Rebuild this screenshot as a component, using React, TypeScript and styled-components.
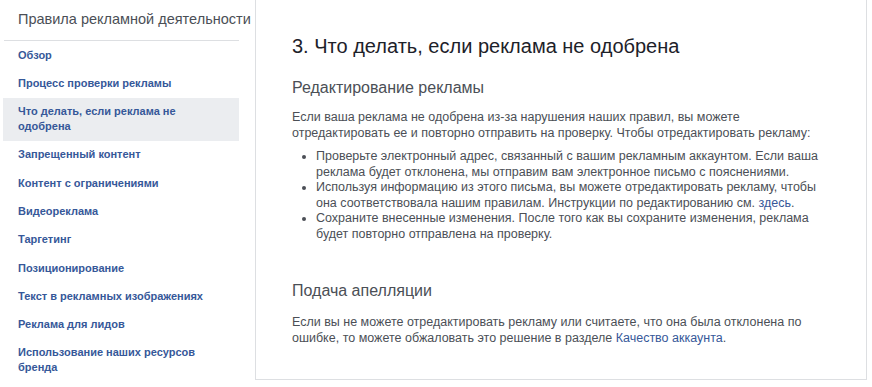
import React from "react";
import styled, { createGlobalStyle } from "styled-components";

const GlobalStyle = createGlobalStyle`
  html, body {
    margin: 0;
    padding: 0;
    background: #fff;
  }
  body {
    font-family: "Liberation Sans", Arial, Helvetica, sans-serif;
    color: #4b4f56;
  }
`;

const Page = styled.div`
  display: flex;
  align-items: flex-start;
  gap: 16px;
  padding-left: 3px;
  width: 872px;
  height: 387px;
  box-sizing: border-box;
  overflow: hidden;
`;

const Sidebar = styled.nav`
  width: 236px;
  flex-shrink: 0;
`;

const SidebarTitle = styled.div`
  padding: 10px 14px 11px;
  font-size: 14.5px;
  line-height: 19px;
  color: #4b4f56;
  white-space: nowrap;
  border-bottom: 1px solid #dddfe2;
  margin-left: 1px;
`;

const Menu = styled.ul`
  list-style: none;
  margin: 0;
  padding: 0;
`;

const MenuItem = styled.li<{ $active?: boolean }>`
  padding: 6.65px 16px 6.65px 15px;
  font-size: 11px;
  font-weight: bold;
  line-height: 15px;
  color: #365899;
  background: ${(p) => (p.$active ? "#ebedf0" : "transparent")};
`;

const Card = styled.main`
  width: 612px;
  box-sizing: border-box;
  border: 1px solid #dddfe2;
  border-top: none;
  padding: 34px 44px 33px 36px;
  background: #fff;
`;

const Heading = styled.h1`
  margin: 0;
  font-size: 20px;
  line-height: 24px;
  font-weight: normal;
  color: #1d2129;
`;

const SubHeading = styled.h2<{ $gap: number }>`
  margin: ${(p) => p.$gap}px 0 0;
  font-size: 16px;
  line-height: 20px;
  font-weight: normal;
  color: #4b4f56;
`;

const Para = styled.p<{ $gap: number }>`
  margin: ${(p) => p.$gap}px 0 0;
  font-size: 12.5px;
  line-height: 16px;
  color: #4b4f56;
`;

const List = styled.ul`
  margin: 8px 0 0;
  padding-left: 24px;
  font-size: 12.5px;
  line-height: 15.5px;
  color: #4b4f56;
`;

const Link = styled.a`
  color: #365899;
  text-decoration: none;
`;

const menu = [
  "Обзор",
  "Процесс проверки рекламы",
  "Что делать, если реклама не одобрена",
  "Запрещенный контент",
  "Контент с ограничениями",
  "Видеореклама",
  "Таргетинг",
  "Позиционирование",
  "Текст в рекламных изображениях",
  "Реклама для лидов",
  "Использование наших ресурсов бренда",
];

export default function App() {
  return (
    <>
      <GlobalStyle />
      <Page>
        <Sidebar>
          <SidebarTitle>Правила рекламной деятельности</SidebarTitle>
          <Menu>
            {menu.map((item, i) => (
              <MenuItem key={item} $active={i === 2}>
                {item}
              </MenuItem>
            ))}
          </Menu>
        </Sidebar>
        <Card>
          <Heading>3. Что делать, если реклама не одобрена</Heading>
          <SubHeading $gap={20}>Редактирование рекламы</SubHeading>
          <Para $gap={11}>
            Если ваша реклама не одобрена из-за нарушения наших правил, вы можете
            отредактировать ее и повторно отправить на проверку. Чтобы
            отредактировать рекламу:
          </Para>
          <List>
            <li>
              Проверьте электронный адрес, связанный с вашим рекламным аккаунтом.
              Если ваша реклама будет отклонена, мы отправим вам электронное
              письмо с пояснениями.
            </li>
            <li>
              Используя информацию из этого письма, вы можете отредактировать
              рекламу, чтобы она соответствовала нашим правилам. Инструкции по
              редактированию см. <Link href="#">здесь</Link>.
            </li>
            <li>
              Сохраните внесенные изменения. После того как вы сохраните
              изменения, реклама будет повторно отправлена на проверку.
            </li>
          </List>
          <SubHeading $gap={39}>Подача апелляции</SubHeading>
          <Para $gap={13}>
            Если вы не можете отредактировать рекламу или считаете, что она была
            отклонена по ошибке, то можете обжаловать это решение в разделе{" "}
            <Link href="#">Качество аккаунта</Link>.
          </Para>
        </Card>
      </Page>
    </>
  );
}
